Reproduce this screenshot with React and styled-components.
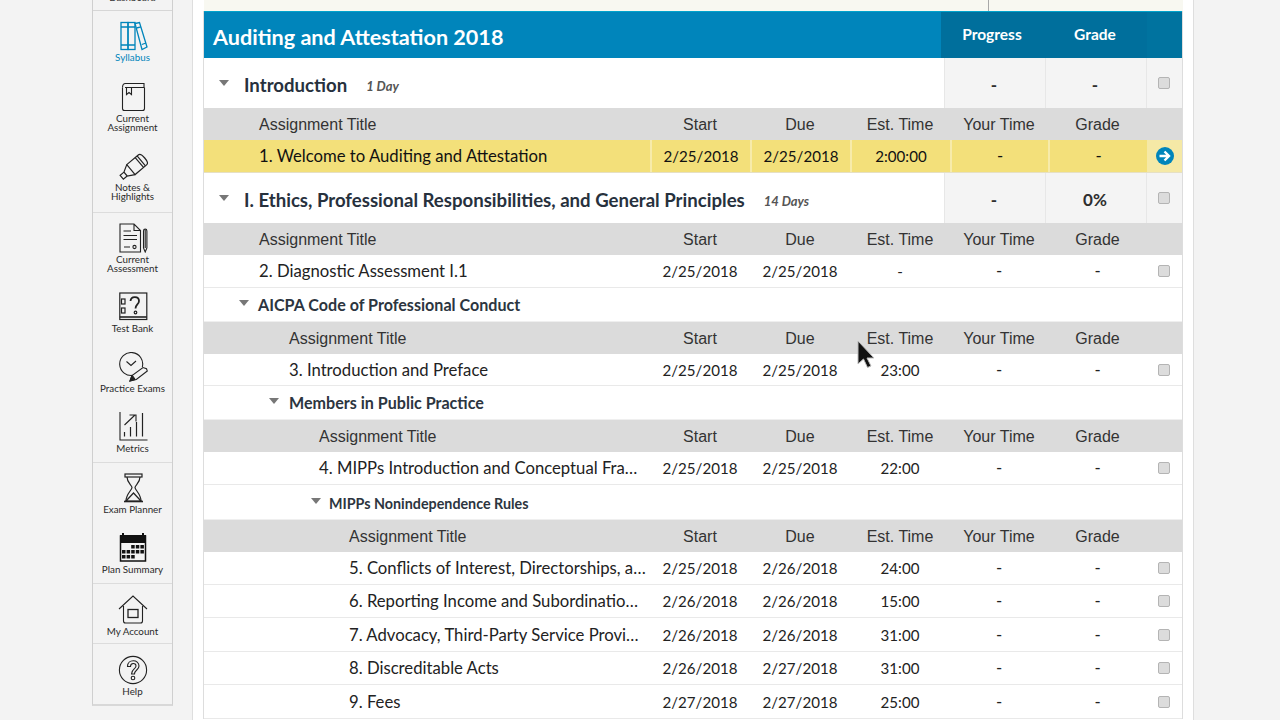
import React from "react";
import styled, { createGlobalStyle } from "styled-components";

const SANS = `"Lato", "Noto Sans", sans-serif`;
const ARIAL = `"Liberation Sans", Arial, sans-serif`;

const GlobalStyle = createGlobalStyle`
  html, body {
    margin: 0;
    padding: 0;
    background: #f3f3f3;
  }
  * {
    box-sizing: border-box;
  }
`;

const BooksIcon = () => (
  <svg width="34" height="30" viewBox="0 0 34 30" fill="none" stroke="#0085bb" strokeWidth="1.3">
    <rect x="5" y="1.5" width="7" height="27" />
    <rect x="12" y="1.5" width="7" height="27" />
    <path d="M5 6h14M5 24h14M19 2.5l4.5-1L31 26l-5 2.5z" />
    <path d="M20.5 7l4.5-1.2M25.8 23.5l4.2-1.500" />
  </svg>
);

const BookIcon = () => (
  <svg width="34" height="30" viewBox="0 0 34 30" fill="none" stroke="#222" strokeWidth="1.1">
    <path d="M6.500 5.500c0-2.500 1-4 3-4h18.500v4H9" />
    <path d="M6.500 5.500v21c0 1.500 1 2 2 2h18c1 0 2-.5 2-2v-21" />
    <path d="M10.500 5.500v7l2.500-2 2.500 2v-7" />
  </svg>
);

const HighlighterIcon = () => (
  <svg width="34" height="30" viewBox="0 0 34 30" fill="none" stroke="#222" strokeWidth="1.2">
    <g transform="translate(18 16) rotate(-40)">
      <path d="M-4-6.500h15c2 0 3 1.500 3 6.500s-1 6.500-3 6.500H-4z" />
      <path d="M7-6.500V6.500M9.500-6.500V6.500" />
      <path d="M-4-6.500l-7 4v5l7 4M-11-2.500h-5v5h5" />
    </g>
  </svg>
);

const DocIcon = () => (
  <svg width="34" height="30" viewBox="0 0 34 30" fill="none" stroke="#222" strokeWidth="1.1">
    <path d="M4 1h14l6.500 6.500V29H4zM18 1v6.500h6.500" />
    <path d="M7.500 8H15M7.500 12.500h13.500M7.500 16.500h13.500M8 24h6" />
    <circle cx="18.500" cy="24" r="1.600" />
    <path d="M27.500 8V25l1.700 4 1.700-4V8c0-2.500-3.400-2.500-3.400 0zM29.200 7v18" />
  </svg>
);

const SafeIcon = () => (
  <svg width="34" height="30" viewBox="0 0 34 30" fill="none" stroke="#222" strokeWidth="1.2">
    <rect x="3.800" y="1" width="27" height="26.500" />
    <path d="M3.800 25h27" strokeWidth="1.600" />
    <rect x="5.500" y="7" width="3.500" height="5" fill="#f3f3f3" />
    <rect x="5.500" y="16" width="3.500" height="5" fill="#f3f3f3" />
    <path d="M14.500 9c.5-5.500 8.500-5 8.500 0 0 3.500-3.500 3.500-3.500 7.500" strokeWidth="1.800" />
    <circle cx="19.500" cy="20.500" r="1.300" />
  </svg>
);

const ClockPencilIcon = () => (
  <svg width="34" height="30" viewBox="0 0 34 30" fill="none" stroke="#222" strokeWidth="1.1">
    <path d="M17.500 23.300A11.500 11.500 0 1 1 26.300 15" />
    <path d="M10.500 9.500l4.500 4 5-4.500" />
    <path d="M14 29l2-5.500 11-8 3.500 1.200.8 2.300-11 8.500z" fill="#f3f3f3" />
    <path d="M14 29l5-1.500-1.500-2.500-1.500-1.500z" fill="#222" />
  </svg>
);

const ChartIcon = () => (
  <svg width="34" height="30" viewBox="0 0 34 30" fill="none" stroke="#222" strokeWidth="1.1">
    <path d="M4 0v28h27.500" />
    <path d="M8.500 20v4.500M14.500 15v9.500M20.500 10v14.500M26.500 1v23.500" strokeWidth="1.200" />
    <path d="M8.500 13L19 3M13.500 3H20v6.500" />
  </svg>
);

const HourglassIcon = () => (
  <svg width="34" height="30" viewBox="0 0 34 30" fill="none" stroke="#222" strokeWidth="1.2">
    <rect x="9" y="1" width="17" height="3" fill="#f3f3f3" />
    <path d="M11 4c0 6 5 8 5 10.500S10 21 10 28M24 4c0 6-5 8-5 10.500S25 21 25 28" />
    <path d="M10 28l7.500-8 7.500 8z" fill="#f3f3f3" />
    <path d="M8 28.500h19" strokeWidth="1.600" />
  </svg>
);

const calendarDots = [];
for (let r = 0; r < 3; r++) {
  for (let c = 0; c < 5; c++) {
    if (r === 0 && c < 2) continue;
    if (r === 2 && c > 2) continue;
    calendarDots.push([6 + c * 4.6, 12 + r * 5]);
  }
}

const CalendarIcon = () => (
  <svg width="34" height="30" viewBox="0 0 34 30" fill="none">
    <path d="M4 2h2V0h2v2h18V0h2v2h2v8H4z" fill="#111" />
    <rect x="4.500" y="3" width="25" height="25" stroke="#111" strokeWidth="1.500" />
    {calendarDots.map(([x, y]) => (
      <rect key={`${x}-${y}`} x={x} y={y} width="3.500" height="3.500" fill="#111" />
    ))}
  </svg>
);

const HouseIcon = () => (
  <svg width="34" height="30" viewBox="0 0 34 30" fill="none" stroke="#222" strokeWidth="1.1">
    <path d="M3 14L17 1l14 13" />
    <path d="M7.500 11v15c0 1.500 1 2 2 2h15c1 0 2-.5 2-2V11" />
    <rect x="12" y="14.500" width="10" height="8" strokeWidth="1.300" />
  </svg>
);

const HelpIcon = () => (
  <svg width="34" height="30" viewBox="0 0 34 30" fill="none" stroke="#222" strokeWidth="1.1">
    <circle cx="17" cy="15" r="13.600" />
    <path d="M11.500 11.500c0-7.500 11.500-7.500 11.500-.5 0 4-4.500 4-4.500 8h-3c0-5 4.500-5 4.500-8 0-3.500-5.500-3.500-5.500.5z" />
    <circle cx="17" cy="23" r="1.800" />
  </svg>
);

const navGroups = [
  {
    gap: 19.5,
    bottom: 11,
    items: [
      { label: ["Syllabus"], icon: <BooksIcon />, active: true },
      { label: ["Current", "Assignment"], icon: <BookIcon /> },
      { label: ["Notes &", "Highlights"], icon: <HighlighterIcon /> },
    ],
  },
  {
    items: [
      { label: ["Current", "Assessment"], icon: <DocIcon /> },
      { label: ["Test Bank"], icon: <SafeIcon /> },
      { label: ["Practice Exams"], icon: <ClockPencilIcon /> },
      { label: ["Metrics"], icon: <ChartIcon /> },
    ],
  },
  {
    items: [
      { label: ["Exam Planner"], icon: <HourglassIcon /> },
      { label: ["Plan Summary"], icon: <CalendarIcon /> },
    ],
  },
  { top: 11, bottom: 7, items: [{ label: ["My Account"], icon: <HouseIcon /> }] },
  { top: 11, bottom: 8, last: true, items: [{ label: ["Help"], icon: <HelpIcon /> }] },
];

const head = (indent) => ({ kind: "head", indent });
const task = (indent, title, start, due, est, h = 33) => ({ kind: "task", indent, title, start, due, est, h });

const rows = [
  { kind: "section", title: "Introduction", days: "1 Day", grade: "-" },
  head(55),
  { kind: "current", indent: 55, title: "1. Welcome to Auditing and Attestation", start: "2/25/2018", due: "2/25/2018", est: "2:00:00" },
  { kind: "section", title: "I. Ethics, Professional Responsibilities, and General Principles", days: "14 Days", grade: "0%" },
  head(55),
  task(55, "2. Diagnostic Assessment I.1", "2/25/2018", "2/25/2018", "-"),
  { kind: "sub", arrow: 35, gap: 9, title: "AICPA Code of Professional Conduct", h: 34 },
  head(85),
  task(85, "3. Introduction and Preface", "2/25/2018", "2/25/2018", "23:00", 32),
  { kind: "sub", arrow: 65, gap: 10, title: "Members in Public Practice", h: 34 },
  head(115),
  task(115, "4. MIPPs Introduction and Conceptual Fra…", "2/25/2018", "2/25/2018", "22:00"),
  { kind: "sub", arrow: 107, gap: 8, title: "MIPPs Nonindependence Rules", h: 35, small: true },
  head(145),
  task(145, "5. Conflicts of Interest, Directorships, a…", "2/25/2018", "2/26/2018", "24:00"),
  task(145, "6. Reporting Income and Subordinatio…", "2/26/2018", "2/26/2018", "15:00"),
  task(145, "7. Advocacy, Third-Party Service Provi…", "2/26/2018", "2/26/2018", "31:00", 34),
  task(145, "8. Discreditable Acts", "2/26/2018", "2/27/2018", "31:00"),
  task(145, "9. Fees", "2/27/2018", "2/27/2018", "25:00", 34),
];

const columns = "446px 100px 100px 100px 98px 99px 35px";

const Page = styled.div`
  display: flex;
  align-items: flex-start;
  position: relative;
  width: 1280px;
  height: 720px;
  padding-left: 92px;
  overflow: hidden;
  background: #f3f3f3;
  font-family: ${SANS};
`;

const Sidebar = styled.nav`
  flex: none;
  width: 81px;
  background: #f3f3f3;
  border: 1px solid #cfcfcf;
  border-top: 0;
  border-bottom: 2px solid #d8d8d8;
`;

const ClippedItem = styled.div`
  display: flex;
  align-items: flex-end;
  justify-content: center;
  height: 11px;
  padding-bottom: 8px;
  overflow: hidden;
  border-bottom: 1px solid #d6d6d6;
  font-size: 9.8px;
  line-height: 9px;
  color: #333;
`;

const NavGroup = styled.div`
  display: flex;
  flex-direction: column;
  gap: ${(p) => p.$gap || 19}px;
  padding: ${(p) => p.$top || 10}px 0 ${(p) => p.$bottom || 9}px;
  border-bottom: ${(p) => (p.$last ? "0" : "1px solid #dcdcdc")};
`;

const NavItem = styled.a`
  display: flex;
  flex-direction: column;
  align-items: center;
  gap: 2px;
  font-size: 9.8px;
  line-height: 9px;
  text-align: center;
  color: ${(p) => (p.$active ? "#0085bb" : "#2a2a2a")};
`;

const NavIcon = styled.span`
  display: block;
  height: 30px;
  svg {
    display: block;
  }
`;

const Main = styled.main`
  flex: none;
  width: 1002px;
  height: 720px;
  margin-left: 19px;
  padding: 0 10px;
  background: #fff;
  border-left: 1px solid #dedede;
  border-right: 1px solid #dedede;
`;

const TopStrip = styled.div`
  display: flex;
  justify-content: flex-end;
  height: 11px;
  margin-left: 1px;
  padding-right: 194px;
  background: #f8f8f1;
`;

const StripRule = styled.span`
  width: 1px;
  background: #a8a8a8;
`;

const Table = styled.section`
  width: 980px;
  border-left: 1px solid #dddddd;
  border-right: 1px solid #dddddd;
`;

const Banner = styled.header`
  display: grid;
  grid-template-columns: 737px 104px 102px 35px;
  height: 47px;
  color: #fff;
  background: #0085bb;
  border-top: 1px solid #00a3cc;
`;

const BannerTitle = styled.h1`
  margin: 0;
  padding: 8px 0 0 9px;
  font-size: 21.6px;
  line-height: 34px;
  font-weight: 700;
`;

const BannerCell = styled.div`
  padding: 7px 2px 0 0;
  font-size: 15.5px;
  line-height: 30px;
  font-weight: 700;
  text-align: center;
  background: ${(p) => p.$tone || "#006f9c"};
`;

const SectionRow = styled.div`
  display: grid;
  grid-template-columns: 740px 101px 101px 36px;
  height: 50px;
`;

const SectionTitle = styled.div`
  display: flex;
  align-items: center;
  padding-left: 15px;
  padding-top: 3px;
`;

const Caret = styled.span`
  flex: none;
  width: 0;
  height: 0;
  margin-bottom: 3px;
  border-left: 5px solid transparent;
  border-right: 5px solid transparent;
  border-top: 6px solid #777;
`;

const SectionName = styled.h2`
  margin: 0 0 0 15px;
  font-size: 18.6px;
  font-weight: 700;
  white-space: nowrap;
  color: #27313d;
`;

const Days = styled.em`
  margin-left: 19px;
  padding-top: 3px;
  font-size: 13px;
  font-weight: 700;
  white-space: nowrap;
  color: #555;
`;

const SummaryCell = styled.div`
  display: flex;
  align-items: center;
  justify-content: center;
  padding-top: ${(p) => (p.$box ? "0" : "3px")};
  padding-right: ${(p) => (p.$box ? "1px" : "2px")};
  background: #f4f4f4;
  border-left: 1px solid #e7e7e7;
  font-size: 17px;
  font-weight: 700;
  color: #2e2e2e;
`;

const Grid = styled.div`
  display: grid;
  grid-template-columns: ${columns};
  align-items: stretch;
`;

const HeadRow = styled(Grid)`
  height: 32px;
  padding-top: 1px;
  background: #dbdbdb;
  font-family: ${ARIAL};
  font-size: 16px;
  color: #333;
`;

const TaskRow = styled(Grid)`
  height: ${(p) => p.$h}px;
  background: #fff;
  border-bottom: 1px solid #e9e9e9;
  font-size: 16.7px;
  color: #222;
`;

const CurrentRow = styled(Grid)`
  height: 33px;
  background: #f3e07a;
  border-bottom: 1px solid #e6e0c4;
  font-size: 16.7px;
  color: #111;
`;

const Cell = styled.div`
  display: flex;
  align-items: center;
  justify-content: center;
  border-left: ${(p) => (p.$divided ? "2px solid #f7ebaa" : "0")};
  background: ${(p) => p.$tint || "transparent"};
`;

const NumCell = styled(Cell)`
  font-size: 15.1px;
`;

const BoxCell = styled(Cell)`
  padding-right: 1px;
`;

const TitleCell = styled.div`
  display: flex;
  align-items: center;
  padding-left: ${(p) => p.$indent}px;
  white-space: nowrap;
  overflow: hidden;
`;

const SubRow = styled.div`
  display: flex;
  align-items: center;
  height: ${(p) => p.$h}px;
  padding-left: ${(p) => p.$arrow}px;
  border-bottom: 1px solid #efefef;
`;

const SubName = styled.h3`
  margin: ${(p) => (p.$small ? "2px" : "-1px")} 0 0 ${(p) => p.$gap}px;
  font-size: ${(p) => (p.$small ? "14.3px" : "16.1px")};
  font-weight: 700;
  color: #2c3540;
`;

const Check = styled.span`
  display: block;
  width: 12px;
  height: 12px;
  background: #dcdcdc;
  border: 1px solid #b4b4b4;
  border-radius: 2px;
`;

const Cursor = styled.svg`
  position: absolute;
  left: 853px;
  top: 339px;
`;

const GoIcon = () => (
  <svg width="18" height="18" viewBox="0 0 18 18">
    <circle cx="9" cy="9" r="9" fill="#0085bb" />
    <path d="M3.500 9h9M8.500 4.500L13 9l-4.500 4.500" fill="none" stroke="#fff" strokeWidth="2.400" />
  </svg>
);

const renderRow = (row, i) => {
  if (row.kind === "section") {
    return (
      <SectionRow key={i}>
        <SectionTitle>
          <Caret />
          <SectionName>{row.title}</SectionName>
          <Days>{row.days}</Days>
        </SectionTitle>
        <SummaryCell>-</SummaryCell>
        <SummaryCell>{row.grade}</SummaryCell>
        <SummaryCell $box>
          <Check />
        </SummaryCell>
      </SectionRow>
    );
  }
  if (row.kind === "head") {
    return (
      <HeadRow key={i}>
        <TitleCell $indent={row.indent}>Assignment Title</TitleCell>
        <Cell>Start</Cell>
        <Cell>Due</Cell>
        <Cell>Est. Time</Cell>
        <Cell>Your Time</Cell>
        <Cell>Grade</Cell>
        <Cell />
      </HeadRow>
    );
  }
  if (row.kind === "sub") {
    return (
      <SubRow key={i} $h={row.h} $arrow={row.arrow}>
        <Caret />
        <SubName $gap={row.gap} $small={row.small}>
          {row.title}
        </SubName>
      </SubRow>
    );
  }
  if (row.kind === "current") {
    return (
      <CurrentRow key={i}>
        <TitleCell $indent={row.indent}>{row.title}</TitleCell>
        <NumCell $divided>{row.start}</NumCell>
        <NumCell $divided>{row.due}</NumCell>
        <NumCell $divided>{row.est}</NumCell>
        <Cell $divided>-</Cell>
        <Cell $divided>-</Cell>
        <Cell $tint="#f5e9a6">
          <GoIcon />
        </Cell>
      </CurrentRow>
    );
  }
  return (
    <TaskRow key={i} $h={row.h}>
      <TitleCell $indent={row.indent}>{row.title}</TitleCell>
      <NumCell>{row.start}</NumCell>
      <NumCell>{row.due}</NumCell>
      <NumCell>{row.est}</NumCell>
      <Cell>-</Cell>
      <Cell>-</Cell>
      <BoxCell>
        <Check />
      </BoxCell>
    </TaskRow>
  );
};

export default function App() {
  return (
    <Page>
      <GlobalStyle />
      <Sidebar>
        <ClippedItem>Dashboard</ClippedItem>
        {navGroups.map((group, g) => (
          <NavGroup key={g} $gap={group.gap} $top={group.top} $bottom={group.bottom} $last={group.last}>
            {group.items.map((item) => (
              <NavItem key={item.label.join(" ")} $active={item.active}>
                <NavIcon>{item.icon}</NavIcon>
                <span>
                  {item.label[0]}
                  {item.label[1] && <br />}
                  {item.label[1]}
                </span>
              </NavItem>
            ))}
          </NavGroup>
        ))}
      </Sidebar>
      <Main>
        <TopStrip>
          <StripRule />
        </TopStrip>
        <Table>
          <Banner>
            <BannerTitle>Auditing and Attestation 2018</BannerTitle>
            <BannerCell>Progress</BannerCell>
            <BannerCell>Grade</BannerCell>
            <BannerCell $tone="#00739f" />
          </Banner>
          {rows.map(renderRow)}
        </Table>
      </Main>
      <Cursor width="22" height="32" viewBox="0 0 22 32">
        <path d="M5 2v23l5.500-5 4 8.500 3.500-1.500-4-8h7z" fill="#111" stroke="#bdbdbd" strokeWidth="1" />
      </Cursor>
    </Page>
  );
}
